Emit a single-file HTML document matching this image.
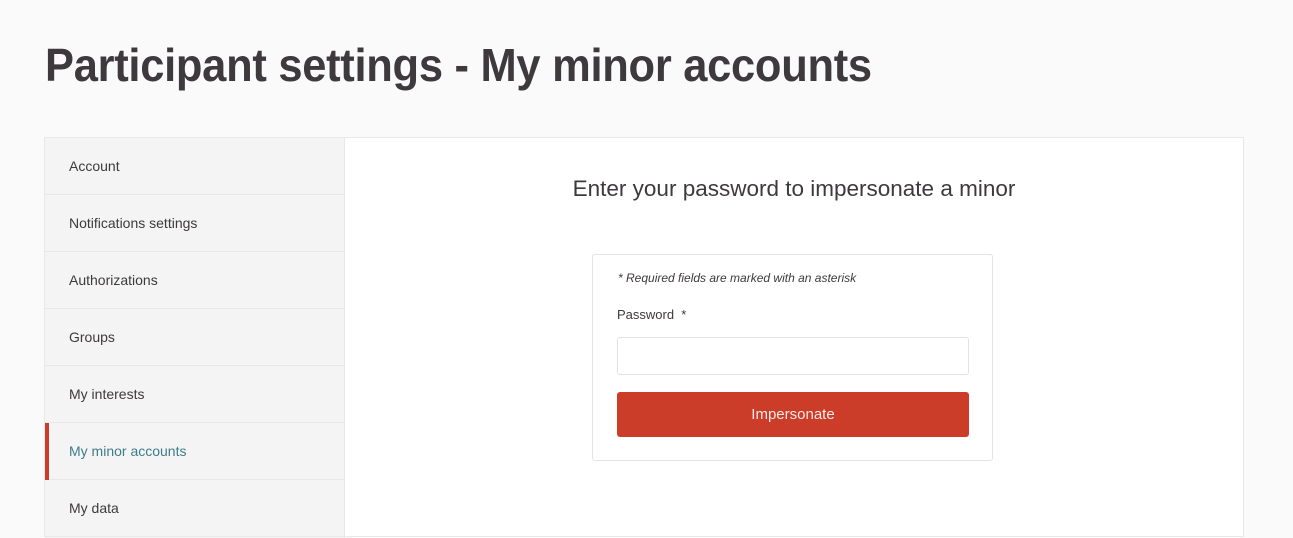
<!DOCTYPE html>
<html><head><style>
*{box-sizing:border-box;margin:0;padding:0}
body{width:1293px;height:520px;overflow:hidden;background:#fafafa;font-family:"Liberation Sans",sans-serif;color:#3d393c;position:relative}
h1{position:absolute;left:45px;top:38px;font-size:46px;font-weight:bold;white-space:nowrap;transform:scaleX(0.945);transform-origin:left top;color:#3d393c;letter-spacing:-0.3px}
.wrap{position:absolute;left:44px;top:137px;width:1200px;height:400px;border:1px solid #e8e8e8;background:#fff}
.side{position:absolute;left:0;top:0;width:300px;height:400px;background:#f4f4f4;border-right:1px solid #e8e8e8}
.item{height:57px;border-bottom:1px solid #e8e8e8;padding-left:24px;line-height:57px;font-size:14px;color:#3d393c;position:relative}
.item.act{color:#3e7c8c}
.item.act:before{content:"";position:absolute;left:0;top:0;width:4px;height:57px;background:#cb3c29}
.hd{position:absolute;left:300px;width:898px;top:38px;text-align:center;font-size:22.5px;color:#3d393c}
.form{position:absolute;left:547px;top:116px;width:401px;height:207px;border:1px solid #e3e3e3;border-radius:3px}
.req{position:absolute;left:25px;top:16px;font-size:12px;font-style:italic}
.lab{position:absolute;left:24px;top:52px;font-size:13px}
.inp{position:absolute;left:24px;top:82px;width:352px;height:38px;border:1px solid #e3e3e3;border-radius:3px}
.btn{position:absolute;left:24px;top:137px;width:352px;height:45px;background:#cb3c29;border-radius:3px;color:#fbe9e6;text-align:center;line-height:45px;font-size:15px}
</style></head><body>
<h1>Participant settings - My minor accounts</h1>
<div class="wrap">
<div class="side">
<div class="item">Account</div>
<div class="item">Notifications settings</div>
<div class="item">Authorizations</div>
<div class="item">Groups</div>
<div class="item">My interests</div>
<div class="item act">My minor accounts</div>
<div class="item">My data</div>
</div>
<div class="hd">Enter your password to impersonate a minor</div>
<div class="form">
<div class="req">* Required fields are marked with an asterisk</div>
<div class="lab">Password&nbsp; *</div>
<div class="inp"></div>
<div class="btn">Impersonate</div>
</div>
</div>
</body></html>
